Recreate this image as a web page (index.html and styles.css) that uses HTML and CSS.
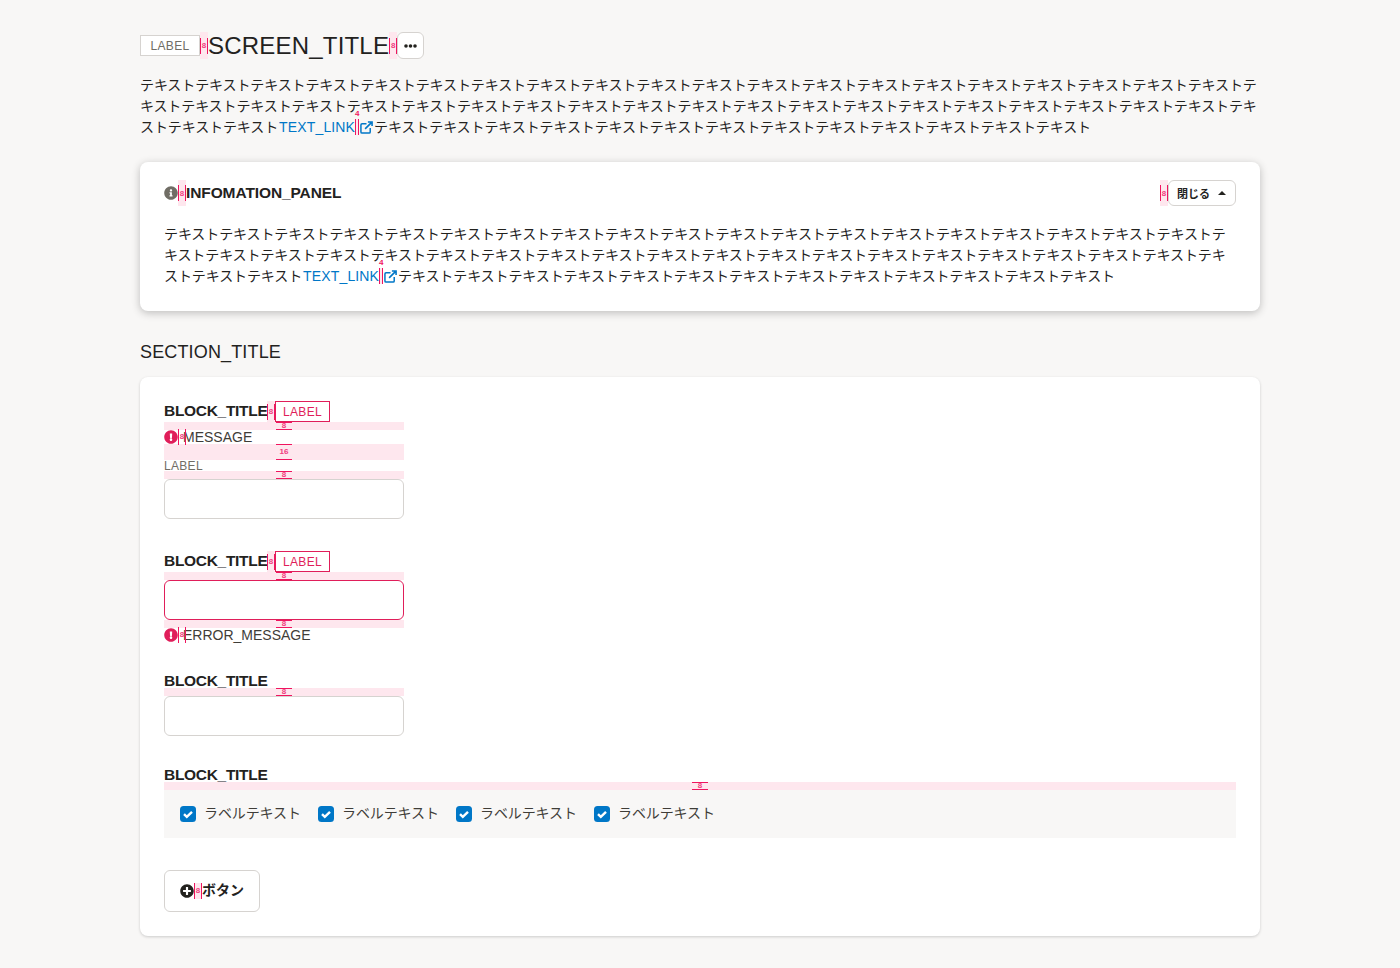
FILE: index.html
```html
<html>

<head>
  <title>Screen Title</title>
  <meta charset="UTF-8">
  <link rel="stylesheet" href="styles.css">
</head>

<body>
  <svg class="defs" width="0" height="0">
    <symbol id="icon-info" viewBox="0 0 512 512">
      <path d="M256 8C119 8 8 119 8 256s111 248 248 248 248-111 248-248S393 8 256 8zm0 110c23.196 0 42 18.804 42 42s-18.804 42-42 42-42-18.804-42-42 18.804-42 42-42zm56 254c0 6.627-5.373 12-12 12h-88c-6.627 0-12-5.373-12-12v-24c0-6.627 5.373-12 12-12h12v-64h-12c-6.627 0-12-5.373-12-12v-24c0-6.627 5.373-12 12-12h64c6.627 0 12 5.373 12 12v100h12c6.627 0 12 5.373 12 12v24z" />
    </symbol>
    <symbol id="icon-alert" viewBox="0 0 512 512">
      <path d="M504 256c0 136.997-111.043 248-248 248S8 392.997 8 256C8 119.083 119.043 8 256 8s248 111.083 248 248zm-248 50c-25.405 0-46 20.595-46 46s20.595 46 46 46 46-20.595 46-46-20.595-46-46-46zm-43.673-165.346l7.418 136c.347 6.364 5.609 11.346 11.982 11.346h48.546c6.373 0 11.635-4.982 11.982-11.346l7.418-136c.375-6.874-5.098-12.654-11.982-12.654h-63.383c-6.884 0-12.356 5.78-11.981 12.654z" />
    </symbol>
    <symbol id="icon-plus" viewBox="0 0 512 512">
      <path d="M256 8C119 8 8 119 8 256s111 248 248 248 248-111 248-248S393 8 256 8zm144 276c0 6.6-5.4 12-12 12h-92v92c0 6.6-5.4 12-12 12h-56c-6.6 0-12-5.4-12-12v-92h-92c-6.6 0-12-5.4-12-12v-56c0-6.6 5.4-12 12-12h92v-92c0-6.6 5.4-12 12-12h56c6.6 0 12 5.4 12 12v92h92c6.6 0 12 5.4 12 12v56z" />
    </symbol>
    <symbol id="icon-external" viewBox="0 0 14 14">
      <path d="M7 3H2.2C1.5 3 1 3.5 1 4.2v7.6c0 .7.5 1.2 1.2 1.2h7.6c.7 0 1.2-.5 1.2-1.2V7.5" fill="none" stroke="currentColor" stroke-width="1.6" />
      <path d="M5.5 8.5L12 2M8.5 1h4.5v4.5" fill="none" stroke="currentColor" stroke-width="1.7" />
    </symbol>
    <symbol id="icon-check" viewBox="0 0 16 16">
      <rect width="16" height="16" rx="3.5" fill="#0077c7" />
      <path d="M4 8.2l2.8 2.7L12 5.8" fill="none" stroke="#fff" stroke-width="2.4" />
    </symbol>
  </svg>

  <div class="page">
    <div class="screen-head">
      <span class="tag">LABEL</span>
      <span class="sp">8</span>
      <h1 class="screen-title">SCREEN_TITLE</h1>
      <span class="sp">8</span>
      <button class="btn-more">
        <svg width="13" height="4" viewBox="0 0 13 4" fill="#23221e">
          <circle cx="2" cy="2" r="1.8" />
          <circle cx="6.5" cy="2" r="1.8" />
          <circle cx="11" cy="2" r="1.8" />
        </svg>
      </button>
    </div>

    <p class="body-text">テキストテキストテキストテキストテキストテキストテキストテキストテキストテキストテキストテキストテキストテキストテキストテキストテキストテキストテキストテキストテキストテキストテキストテキストテキストテキストテキストテキストテキストテキストテキストテキストテキストテキストテキストテキストテキストテキストテキストテキストテキストテキストテキスト<a class="link">TEXT_LINK</a><span class="sp-inline"><i>4</i></span><svg class="icon-ext"><use href="#icon-external" /></svg>テキストテキストテキストテキストテキストテキストテキストテキストテキストテキストテキストテキストテキスト</p>

    <section class="panel">
      <div class="panel-head">
        <svg class="icon icon-grey"><use href="#icon-info" /></svg>
        <span class="sp">8</span>
        <h2 class="panel-title">INFOMATION_PANEL</h2>
        <span class="sp panel-sp">8</span>
        <button class="btn-close">閉じる
          <svg width="8" height="4" viewBox="0 0 8 4" fill="#23221e"><path d="M4 0l4 4H0z" /></svg>
        </button>
      </div>
      <p class="body-text">テキストテキストテキストテキストテキストテキストテキストテキストテキストテキストテキストテキストテキストテキストテキストテキストテキストテキストテキストテキストテキストテキストテキストテキストテキストテキストテキストテキストテキストテキストテキストテキストテキストテキストテキストテキストテキストテキストテキストテキストテキスト<a class="link">TEXT_LINK</a><span class="sp-inline"><i>4</i></span><svg class="icon-ext"><use href="#icon-external" /></svg>テキストテキストテキストテキストテキストテキストテキストテキストテキストテキストテキストテキストテキスト</p>
    </section>

    <h2 class="section-title">SECTION_TITLE</h2>

    <section class="card">
      <div class="block">
        <div class="block-head">
          <h3 class="block-title">BLOCK_TITLE</h3>
          <span class="sp">8</span>
          <span class="tag tag-danger">LABEL</span>
        </div>
        <div class="vsp"><span>8</span></div>
        <div class="message">
          <svg class="icon icon-danger"><use href="#icon-alert" /></svg>
          <span class="sp sp-plain">8</span>
          <span class="message-text">MESSAGE</span>
        </div>
        <div class="vsp vsp-16"><span>16</span></div>
        <div class="field-label">LABEL</div>
        <div class="vsp"><span>8</span></div>
        <div class="input"></div>
      </div>

      <div class="block">
        <div class="block-head">
          <h3 class="block-title">BLOCK_TITLE</h3>
          <span class="sp">8</span>
          <span class="tag tag-danger">LABEL</span>
        </div>
        <div class="vsp"><span>8</span></div>
        <div class="input input-error"></div>
        <div class="vsp"><span>8</span></div>
        <div class="message">
          <svg class="icon icon-danger"><use href="#icon-alert" /></svg>
          <span class="sp sp-plain">8</span>
          <span class="message-text">ERROR_MESSAGE</span>
        </div>
      </div>

      <div class="block block-tight">
        <h3 class="block-title">BLOCK_TITLE</h3>
        <div class="vsp"><span>8</span></div>
        <div class="input"></div>
      </div>

      <div class="block block-tight block-wide">
        <h3 class="block-title">BLOCK_TITLE</h3>
        <div class="vsp"><span>8</span></div>
        <div class="check-box">
          <label class="check"><svg class="icon-check"><use href="#icon-check" /></svg>ラベルテキスト</label>
          <label class="check"><svg class="icon-check"><use href="#icon-check" /></svg>ラベルテキスト</label>
          <label class="check"><svg class="icon-check"><use href="#icon-check" /></svg>ラベルテキスト</label>
          <label class="check"><svg class="icon-check"><use href="#icon-check" /></svg>ラベルテキスト</label>
        </div>
      </div>

      <button class="btn-add">
        <svg class="icon"><use href="#icon-plus" /></svg>
        <span class="sp sp-short">8</span>
        <span class="btn-add-text">ボタン</span>
      </button>
    </section>
  </div>
</body>

</html>
```

FILE: styles.css
```css
* {
  box-sizing: border-box;
  font-family: "Liberation Sans", "Noto Sans CJK JP", sans-serif;
}

body {
  margin: 0;
  background-color: #f8f7f6;
  color: #23221e;
}

h1,
h2,
h3,
p {
  margin: 0;
}

.defs {
  position: absolute;
}

.page {
  width: 1120px;
  margin: 0 auto;
  padding: 32px 0;
}

/* spacer markers */
.sp {
  position: relative;
  flex: none;
  display: flex;
  align-items: center;
  justify-content: center;
  align-self: stretch;
  width: 8px;
  background-color: #fee7ee;
  color: #f0407f;
  font-size: 8px;
  font-weight: bold;
}

.sp::before {
  content: "";
  position: absolute;
  top: 50%;
  left: 0;
  right: 0;
  height: 16px;
  margin-top: -8px;
  border-left: 1px solid #f0145f;
  border-right: 1px solid #f0145f;
}

.sp-plain {
  background-color: transparent;
}

.sp-short {
  height: 16px;
  align-self: center;
}

.sp-inline {
  position: relative;
  display: inline-block;
  width: 4px;
  height: 16px;
  margin: 0 1px 0 0;
  vertical-align: -3px;
  background-color: #fee7ee;
  border-left: 1px solid #f0145f;
  border-right: 1px solid #f0145f;
}

.sp-inline i {
  position: absolute;
  top: -9px;
  left: -1px;
  width: 4px;
  color: #f0145f;
  font-size: 8px;
  font-style: normal;
  font-weight: bold;
  line-height: 8px;
  text-align: center;
}

.vsp {
  display: flex;
  justify-content: center;
  height: 8px;
  background-color: #fee7ee;
}

.vsp span {
  width: 16px;
  height: 100%;
  border-top: 1px solid #f0145f;
  border-bottom: 1px solid #f0145f;
  color: #f0407f;
  font-size: 8px;
  font-weight: bold;
  line-height: 6px;
  text-align: center;
}

.vsp-16 {
  height: 16px;
}

.vsp-16 span {
  line-height: 14px;
}

/* header */
.screen-head {
  display: flex;
  align-items: center;
  height: 27px;
}

.screen-title {
  font-size: 24px;
  font-weight: normal;
  letter-spacing: 0.2px;
  line-height: 27px;
}

.tag {
  display: block;
  flex: none;
  width: 60px;
  height: 21px;
  background-color: #fff;
  border: 1px solid #d6d3d0;
  color: #706d65;
  font-size: 12px;
  letter-spacing: 0.3px;
  line-height: 20px;
  text-align: center;
}

.tag-danger {
  width: 55px;
  border-color: #e01e5a;
  color: #e01e5a;
}

.btn-more {
  display: flex;
  align-items: center;
  justify-content: center;
  width: 27px;
  height: 27px;
  padding: 0;
  background-color: #fff;
  border: 1px solid #d6d3d0;
  border-radius: 6px;
}

.body-text {
  margin-top: 16px;
  font-size: 14px;
  letter-spacing: -0.11px;
  line-height: 21px;
}

.link {
  margin-left: 1px;
  color: #0077c7;
  letter-spacing: 0.15px;
}

.icon-ext {
  width: 13px;
  height: 13px;
  margin-right: 1px;
  color: #0077c7;
  vertical-align: -2px;
}

.icon {
  flex: none;
  width: 14px;
  height: 14px;
  fill: #23221e;
}

.icon-grey {
  fill: #706d65;
}

.icon-danger {
  fill: #e01e5a;
}

/* information panel */
.panel {
  margin-top: 24px;
  padding: 18px 24px 24px;
  background-color: #fff;
  border-radius: 8px;
  box-shadow: 0 2px 8px rgba(0, 0, 0, 0.24);
}

.panel-head {
  display: flex;
  align-items: center;
  height: 26px;
}

.panel-title {
  flex: 1;
  font-size: 15.5px;
  letter-spacing: -0.1px;
  line-height: 26px;
}

.panel .body-text {
  margin-top: 18px;
}

.btn-close {
  display: flex;
  align-items: center;
  justify-content: space-between;
  width: 68px;
  height: 26px;
  padding: 0 9px 0 8px;
  background-color: #fff;
  border: 1px solid #d6d3d0;
  border-radius: 6px;
  color: #23221e;
  font-size: 11px;
  font-weight: bold;
}

.section-title {
  margin: 32px 0 16px;
  font-size: 18px;
  font-weight: normal;
  letter-spacing: 0.15px;
  line-height: 18px;
}

/* form card */
.card {
  padding: 24px;
  background-color: #fff;
  border-radius: 8px;
  box-shadow: 0 1px 3px rgba(0, 0, 0, 0.18);
}

.block {
  width: 240px;
  margin-bottom: 32px;
}

.block-tight {
  margin-top: -2px;
}

.block-wide {
  width: 100%;
}

.block-head {
  display: flex;
  align-items: center;
  height: 21px;
}

.block-title {
  flex: none;
  width: 103px;
  height: 16px;
  font-size: 15.5px;
  letter-spacing: -0.3px;
  line-height: 18px;
  white-space: nowrap;
}

.block-head .block-title {
  margin-top: -2px;
  line-height: 16px;
}

.message {
  display: flex;
  align-items: center;
  height: 14px;
  color: #3f3d38;
  font-size: 14px;
  line-height: 14px;
}

.message-text {
  margin-left: -3px;
}

.field-label {
  height: 11px;
  color: #706d65;
  font-size: 12px;
  letter-spacing: 0.3px;
  line-height: 12px;
}

.input {
  height: 40px;
  background-color: #fff;
  border: 1px solid #d6d3d0;
  border-radius: 6px;
}

.input-error {
  border-color: #e01e5a;
}

.check-box {
  display: flex;
  align-items: center;
  gap: 17.2px;
  height: 48px;
  padding: 0 16px;
  background-color: #f8f7f6;
}

.check {
  display: flex;
  align-items: flex-start;
  gap: 8px;
  color: #3f3d38;
  font-size: 14px;
  letter-spacing: -0.11px;
  line-height: 14px;
}

.icon-check {
  flex: none;
  width: 16px;
  height: 16px;
}

.btn-add {
  display: flex;
  align-items: center;
  width: 96px;
  height: 42px;
  padding: 0 15px;
  background-color: #fff;
  border: 1px solid #d6d3d0;
  border-radius: 6px;
  color: #23221e;
  font-size: 14px;
  font-weight: bold;
  line-height: 14px;
}

.btn-add-text {
  margin-top: -2px;
}
```
